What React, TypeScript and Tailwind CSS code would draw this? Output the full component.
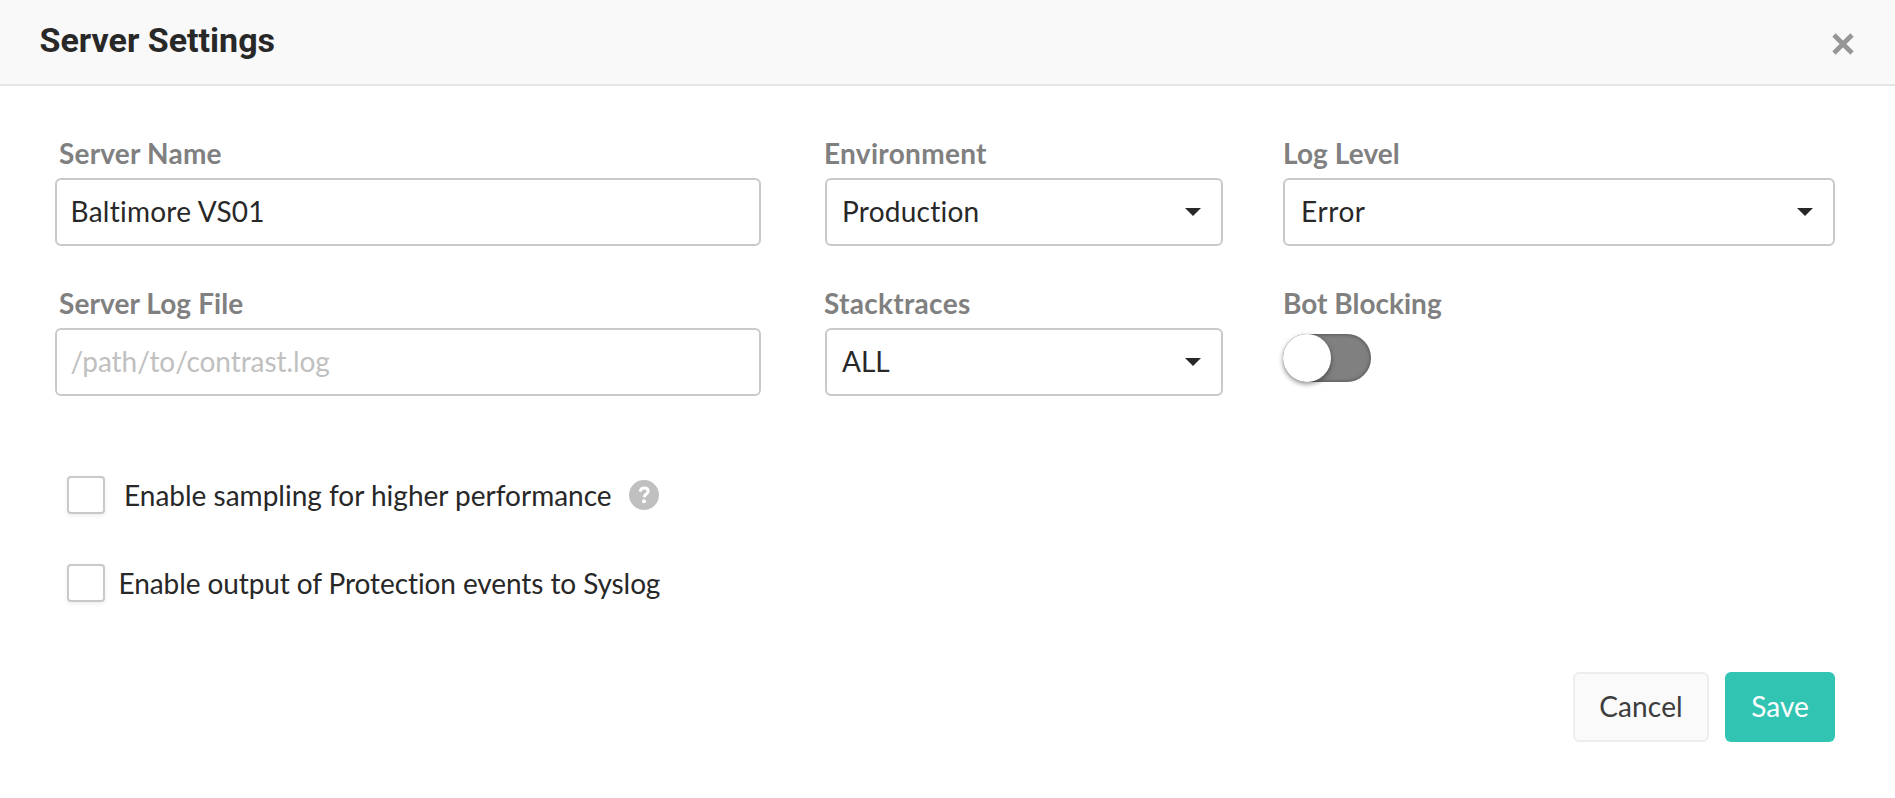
import { useState } from "react";
import type { ReactNode } from "react";

function Field({
  label,
  className = "",
  labelClass = "",
  children,
}: {
  label: string;
  className?: string;
  labelClass?: string;
  children: ReactNode;
}) {
  return (
    <div className={"flex flex-col gap-2 " + className}>
      <span className={"h-[34px] whitespace-nowrap font-bold leading-[34px] text-[#808080] " + labelClass}>{label}</span>
      {children}
    </div>
  );
}

function TextInput({ className = "", ...props }: { className?: string; defaultValue?: string; placeholder?: string }) {
  return (
    <input
      {...props}
      className={
        "h-[68px] w-full rounded-md border-2 border-[#c9c9c9] bg-white px-[13.5px] pb-0.5 text-[#282828] outline-none placeholder:text-[#c0c0c0] " +
        className
      }
    />
  );
}

function Select({ value, valueClass = "" }: { value: string; valueClass?: string }) {
  return (
    <button className="flex h-[68px] w-full items-center justify-between rounded-md border-2 border-[#c9c9c9] bg-white pr-5 pl-[15px] text-[#282828]">
      <span className={"pb-0.5 leading-[34px] " + valueClass}>{value}</span>
      <svg width="16" height="8" viewBox="0 0 16 8" fill="#282828">
        <path d="M0 0h16L8 8z" />
      </svg>
    </button>
  );
}

function Toggle() {
  const [on, setOn] = useState(false);
  return (
    <button
      onClick={() => setOn(!on)}
      className={
        "mt-1.5 flex h-12 w-[88px] rounded-full shadow-[inset_0_0_4px_rgba(0,0,0,0.45)] " +
        (on ? "justify-end bg-[#32c4b3]" : "bg-[#808080]")
      }
    >
      <span className="size-12 rounded-full bg-white shadow-[0_2px_5px_rgba(0,0,0,0.45)]" />
    </button>
  );
}

function Checkbox() {
  return (
    <input
      type="checkbox"
      className="size-[38px] shrink-0 appearance-none rounded border-2 border-[#c9c9c9] bg-white shadow-[0_2px_4px_rgba(0,0,0,0.07)] checked:bg-[#32c4b3]"
    />
  );
}

export default function App() {
  return (
    <div className="flex h-[798px] w-[1895px] flex-col overflow-hidden bg-white font-[Lato,sans-serif] text-[28px] text-[#282828] [font-variant-ligatures:none]">
      <header className="flex h-[86px] shrink-0 justify-between border-b-2 border-[#e4e4e4] bg-[#f9f9f9] pr-[41px] pl-[39.5px]">
        <h1 className="mt-5 font-[Roboto,sans-serif] text-[34px] font-bold leading-10">Server Settings</h1>
        <button aria-label="Close" className="mt-8 h-[23px] w-[22px]">
          <svg width="22" height="22" viewBox="0 0 22 22" stroke="#969696" strokeWidth="4.6" fill="none">
            <path d="M2 2l18 18M20 2L2 20" />
          </svg>
        </button>
      </header>

      <main className="flex grow flex-col pr-[60px] pl-[55px] pt-[50px]">
        <div className="grid grid-cols-[770px_458px_552px] gap-y-10">
          <Field label="Server Name" className="pr-16" labelClass="pl-1 tracking-[0.2px]">
            <TextInput defaultValue="Baltimore VS01" className="tracking-[0.25px]" />
          </Field>
          <Field label="Environment" className="pr-[60px]" labelClass="-ml-px tracking-[0.3px]">
            <Select value="Production" valueClass="tracking-[0.24px]" />
          </Field>
          <Field label="Log Level" labelClass="tracking-[0.1px]">
            <Select value="Error" valueClass="pl-px tracking-[0.6px]" />
          </Field>
          <Field label="Server Log File" className="pr-16" labelClass="pl-1 tracking-[0.1px]">
            <TextInput placeholder="/path/to/contrast.log" className="tracking-[-0.06px]" />
          </Field>
          <Field label="Stacktraces" className="pr-[60px]" labelClass="-ml-px tracking-[0.3px]">
            <Select value="ALL" />
          </Field>
          <Field label="Bot Blocking">
            <Toggle />
          </Field>
        </div>

        <div className="mt-20 flex flex-col gap-[50px] pl-3">
          <label className="flex h-[38px] items-center">
            <Checkbox />
            <span className="ml-[19px] leading-[34px]">Enable sampling for higher performance</span>
            <svg className="ml-[17px]" width="30" height="30" viewBox="0 0 30 30">
              <circle cx="15" cy="15" r="15" fill="#c0c0c0" />
              <path d="M11.2 11.6c.3-2.4 1.8-3.7 4-3.7 2.300 0 4 1.300 4 3.300 0 3-3.900 2.700-3.900 6" fill="none" stroke="#fff" strokeWidth="3" />
              <circle cx="15" cy="21.300" r="2" fill="#fff" />
            </svg>
          </label>
          <label className="flex h-[38px] items-center">
            <Checkbox />
            <span className="ml-[13.5px] leading-[34px] tracking-[-0.09px]">Enable output of Protection events to Syslog</span>
          </label>
        </div>

        <div className="mt-[70px] flex justify-end gap-4">
          <button className="h-[70px] w-[136px] rounded-md border-2 border-[#ededed] bg-[#fafafa] pb-[3px] tracking-[0.15px] text-[#3c3c3c]">Cancel</button>
          <button className="h-[70px] w-[110px] rounded-md bg-[#32c4b3] pb-[3px] text-white">Save</button>
        </div>
      </main>
    </div>
  );
}
